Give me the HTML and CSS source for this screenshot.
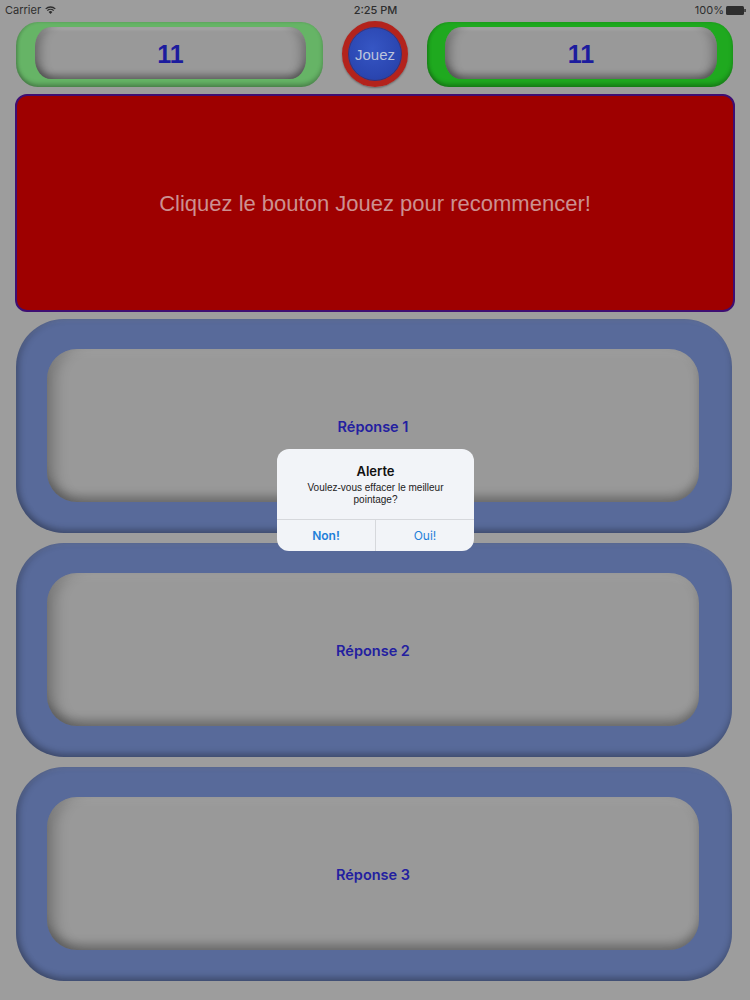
FILE: index.html
```html
<!DOCTYPE html>
<html lang="fr">
<head>
<meta charset="utf-8">
<title>Quiz</title>
<link rel="stylesheet" href="styles.css">
</head>
<body>
<div class="screen">
  <header class="status">
    <div class="status-left">
      <span>Carrier</span>
      <svg class="wifi" width="11" height="8" viewBox="0 0 11 8">
        <path d="M5.5 8 L3.6 5.9 A2.8 2.8 0 0 1 7.4 5.9 Z" fill="#2e2e2e"/>
        <path d="M2.3 4.6 A4.6 4.6 0 0 1 8.7 4.6" stroke="#2e2e2e" stroke-width="1.3" fill="none"/>
        <path d="M0.7 2.9 A7 7 0 0 1 10.3 2.9" stroke="#2e2e2e" stroke-width="1.3" fill="none"/>
      </svg>
    </div>
    <div class="status-time">2:25 PM</div>
    <div class="status-right">
      <span>100%</span>
      <svg class="battery" width="20" height="9" viewBox="0 0 20 9">
        <rect x="0" y="0" width="18" height="9" rx="1.5" fill="#2e2e2e"/>
        <rect x="18.3" y="3" width="1.5" height="3" fill="#2e2e2e"/>
      </svg>
    </div>
  </header>

  <section class="scores">
    <div class="score score-best"><div class="score-face">11</div></div>
    <button class="play"><span>Jouez</span></button>
    <div class="score score-current"><div class="score-face">11</div></div>
  </section>

  <section class="question">
    <p>Cliquez le bouton Jouez pour recommencer!</p>
  </section>

  <section class="answers">
    <div class="answer"><div class="answer-face">Réponse 1</div></div>
    <div class="answer"><div class="answer-face">Réponse 2</div></div>
    <div class="answer"><div class="answer-face">Réponse 3</div></div>
  </section>

  <div class="alert">
    <div class="alert-body">
      <div class="alert-title">Alerte</div>
      <div class="alert-message">Voulez-vous effacer le meilleur pointage?</div>
    </div>
    <div class="alert-actions">
      <div class="alert-btn alert-cancel">Non!</div>
      <div class="alert-btn">Oui!</div>
    </div>
  </div>
</div>
</body>
</html>
```

FILE: styles.css
```css
* { box-sizing: border-box; }

html, body {
  margin: 0;
  padding: 0;
}

body {
  background: #9d9d9d;
  font-family: "Liberation Sans", Arial, sans-serif;
  width: 750px;
  height: 1000px;
  overflow: hidden;
}

.screen {
  position: relative;
  width: 750px;
  height: 1000px;
}

/* status bar */
.status {
  height: 20px;
  display: flex;
  align-items: center;
  justify-content: space-between;
  padding: 0 4px 0 5px;
  font-size: 11px;
  color: #2e2e2e;
  font-family: "Inter", "Liberation Sans", sans-serif;
}
.status-left, .status-right {
  display: flex;
  align-items: center;
  gap: 4px;
  width: 80px;
}
.status-right { justify-content: flex-end; gap: 2px; }
.status-time { font-weight: 500; }

/* score row */
.scores {
  display: flex;
  align-items: center;
  height: 66px;
  margin-top: 1px;
  padding: 0 17px 0 16px;
  gap: 19px;
}

.score {
  flex: 0 0 307px;
  height: 65px;
  border-radius: 22px / 24px;
  padding: 5px 17px 8px 19px;
  box-shadow: inset 0 -3px 4px rgba(0, 0, 0, 0.25), inset 2px 0 3px rgba(0, 0, 0, 0.12);
}
.score-best { background: #66b466; }
.score-current { background: #1fa91f; flex-basis: 306px; padding: 5px 16px 8px 18px; }

.score-face {
  height: 100%;
  border-radius: 16px / 20px;
  background: #999999;
  display: flex;
  align-items: center;
  justify-content: center;
  font-size: 25px;
  font-weight: bold;
  color: #1c1c9e;
  padding-top: 4px;
  box-shadow:
    inset 0 -6px 6px -2px rgba(0, 0, 0, 0.35),
    inset 14px 0 10px -8px rgba(0, 0, 0, 0.25),
    inset -14px 0 10px -8px rgba(0, 0, 0, 0.2),
    inset 0 3px 3px rgba(255, 255, 255, 0.12);
}

.play {
  flex: 0 0 66px;
  height: 66px;
  border-radius: 50%;
  border: 6px solid #b3231c;
  background: radial-gradient(circle at 45% 40%, #3656c4 0%, #2b47b2 60%, #233c9c 100%);
  padding: 0;
  display: flex;
  align-items: center;
  justify-content: center;
  color: #bcc4dc;
  font-family: "Liberation Sans", Arial, sans-serif;
  font-size: 15px;
  box-shadow: 0 1px 2px rgba(0, 0, 0, 0.35), inset 0 0 0 1px rgba(90, 20, 20, 0.4);
}

/* question panel */
.question {
  margin: 7px 15px 0 15px;
  height: 218px;
  background: #9e0000;
  border: 2px solid #3e0e72;
  border-radius: 12px;
  display: flex;
  align-items: center;
  justify-content: center;
}
.question p {
  margin: 0;
  color: #cc9090;
  font-family: "Liberation Sans", Arial, sans-serif;
  font-size: 22px;
  padding-top: 2px;
}

/* answer buttons */
.answers {
  display: flex;
  flex-direction: column;
  gap: 10px;
  margin: 7px 18px 0 16px;
}

.answer {
  height: 214px;
  background: #586a9a;
  border-radius: 48px;
  padding: 30px 33px 31px 31px;
  box-shadow:
    inset 0 -4px 6px rgba(0, 0, 0, 0.22),
    inset 4px 0 6px rgba(0, 0, 0, 0.15),
    inset 0 3px 3px rgba(255, 255, 255, 0.06);
}

.answer-face {
  height: 100%;
  border-radius: 30px;
  background: #999999;
  display: flex;
  align-items: center;
  justify-content: center;
  font-family: "Inter", "Liberation Sans", sans-serif;
  font-size: 14.5px;
  font-weight: 600;
  color: #2320a0;
  padding-top: 2px;
  box-shadow:
    inset 0 -10px 10px -4px rgba(0, 0, 0, 0.28),
    inset 16px 0 14px -8px rgba(0, 0, 0, 0.22),
    inset -8px 0 10px -6px rgba(0, 0, 0, 0.1),
    inset 0 10px 10px -6px rgba(255, 255, 255, 0.08);
}

/* alert dialog over the dimmed screen */
.alert {
  position: absolute;
  left: 277px;
  top: 449px;
  width: 197px;
  height: 102px;
  border-radius: 12px;
  background: #f2f4f8;
  font-family: "Inter", "Liberation Sans", sans-serif;
  display: flex;
  flex-direction: column;
  overflow: hidden;
}
.alert-body {
  flex: 1;
  text-align: center;
  padding: 14px 14px 0;
}
.alert-title {
  font-size: 13px;
  font-weight: 600;
  line-height: 16px;
  color: #111;
}
.alert-message {
  font-family: "Liberation Sans", Arial, sans-serif;
  font-size: 10px;
  line-height: 12px;
  color: #222;
  margin-top: 3px;
}
.alert-actions {
  height: 32px;
  display: flex;
  border-top: 1px solid #d6d8dc;
}
.alert-btn {
  flex: 1;
  display: flex;
  align-items: center;
  justify-content: center;
  font-size: 12px;
  color: #1f80d8;
}
.alert-btn + .alert-btn { border-left: 1px solid #d6d8dc; }
.alert-cancel { font-weight: 600; }
```
